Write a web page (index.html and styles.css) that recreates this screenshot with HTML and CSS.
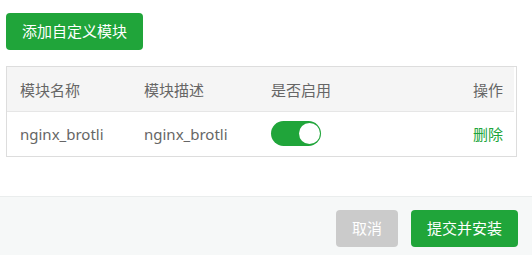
FILE: index.html
```html
<!DOCTYPE html>
<html lang="zh-CN">
<head>
    <meta charset="UTF-8">
    <meta name="viewport" content="width=device-width, initial-scale=1.0">
    <title>自定义模块</title>
    <link rel="stylesheet" href="styles.css">
</head>
<body>
    <div class="content">
        <button class="btn btn-green add-btn">添加自定义模块</button>

        <!-- 模块列表 -->
        <div class="table-box">
            <table class="module-table">
                <thead>
                    <tr>
                        <th class="col-name">模块名称</th>
                        <th class="col-desc">模块描述</th>
                        <th class="col-status">是否启用</th>
                        <th class="col-op">操作</th>
                    </tr>
                </thead>
                <tbody>
                    <tr>
                        <td>nginx_brotli</td>
                        <td>nginx_brotli</td>
                        <td><span class="switch on"><span class="knob"></span></span></td>
                        <td class="col-op"><a class="link-del">删除</a></td>
                    </tr>
                </tbody>
            </table>
        </div>
    </div>

    <div class="footer">
        <button class="btn btn-grey">取消</button>
        <button class="btn btn-green submit-btn">提交并安装</button>
    </div>
</body>
</html>
```

FILE: styles.css
```css
html, body {
    margin: 0;
    padding: 0;
    height: 100%;
}
body {
    font-family: "Noto Sans", "Noto Sans CJK SC", sans-serif;
    font-size: 15px;
    color: #666;
    background: #fff;
    display: flex;
    flex-direction: column;
    overflow: hidden;
}
.content {
    padding: 13px 15px 0 6px;
    height: 196px;
    box-sizing: border-box;
    flex-shrink: 0;
}
.btn {
    font-family: inherit;
    font-size: 15px;
    color: #fff;
    border: none;
    border-radius: 4px;
    height: 37px;
    padding: 0 16px;
    line-height: 37px;
    cursor: pointer;
}
.btn-green {
    background-color: #20a53a;
}
.btn-grey {
    background-color: #cbcbcb;
}
.add-btn {
    width: 137px;
    padding: 0;
    display: block;
}
.table-box {
    margin-top: 16px;
    border: 1px solid #ddd;
    padding-right: 2px;
}
.module-table {
    width: 100%;
    border-collapse: collapse;
}
.module-table th {
    background: #f5f5f5;
    font-weight: normal;
    text-align: left;
    height: 44px;
    padding: 0 13px;
    border-bottom: 1px solid #e6e6e6;
}
.module-table td {
    height: 43px;
    padding: 0 13px;
    border-bottom: 1px solid #fff;
}
.module-table th.col-name { width: 98px; }
.module-table th.col-desc { width: 101px; }
.module-table .col-op { text-align: right; padding-right: 11px; }
.switch {
    display: inline-block;
    vertical-align: middle;
    width: 50px;
    height: 25px;
    border-radius: 13px;
    background: #20a53a;
    position: relative;
}
.switch .knob {
    position: absolute;
    top: 2px;
    right: 1px;
    width: 21px;
    height: 21px;
    border-radius: 50%;
    background: #fff;
}
.link-del {
    color: #20a53a;
    cursor: pointer;
}
.footer {
    flex: 1;
    background: #f6f8f8;
    border-top: 1px solid #eaeded;
    display: flex;
    justify-content: flex-end;
    align-items: flex-start;
    gap: 13px;
    padding: 13px 14px 0 0;
}
.btn-grey { width: 62px; padding: 0; }
.submit-btn {
    width: 107px;
    padding: 0;
}
```
